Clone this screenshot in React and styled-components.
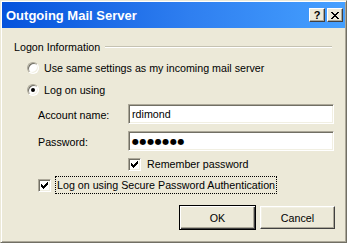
import React from "react";
import styled, { createGlobalStyle } from "styled-components";

const GlobalStyle = createGlobalStyle`
  html, body {
    margin: 0;
    padding: 0;
    background: #ece9d8;
  }
  body {
    font-family: "Liberation Sans", Arial, sans-serif;
    font-size: 10.7px;
    color: #000;
  }
`;

const Window = styled.div`
  width: 347px;
  height: 243px;
  box-sizing: border-box;
  background: #ece9d8;
  border: 1px solid;
  border-color: #ece9d8 #716f64 #716f64 #ece9d8;
  box-shadow: inset 1px 1px #fff, inset -1px -1px #aca899;
  padding: 1px;
  display: flex;
  flex-direction: column;
`;

const TitleBar = styled.div`
  height: 26px;
  flex: none;
  display: flex;
  align-items: center;
  padding: 0 2px;
  background: linear-gradient(to right, #0553dc, #2f7ff0 55%, #45a0ff);
`;

const Title = styled.div`
  flex: 1;
  color: #fff;
  font-weight: 700;
  font-size: 13px;
  padding-left: 2px;
`;

const CaptionButton = styled.div`
  width: 16px;
  height: 14px;
  box-sizing: border-box;
  margin-left: 2px;
  background: #ece9d8;
  border: 1px solid;
  border-color: #fff #404040 #404040 #fff;
  box-shadow: inset -1px -1px #aca899;
  display: flex;
  align-items: center;
  justify-content: center;
  font-weight: 700;
  font-size: 11px;
  line-height: 1;
`;

const Body = styled.div`
  flex: 1;
  display: flex;
  flex-direction: column;
  padding: 0 10px 0 12px;
`;

const GroupHeader = styled.div`
  margin-top: 13px;
  height: 12px;
  display: flex;
  align-items: center;
  gap: 5px;
`;

const GroupLine = styled.div`
  flex: 1;
  margin-right: 3px;
  border-top: 1px solid #c5c2b2;
  border-bottom: 1px solid #fff;
`;

const OptionRow = styled.div`
  height: 16px;
  margin-top: ${(p) => p.$top}px;
  margin-left: ${(p) => p.$left}px;
  display: flex;
  align-items: center;
  gap: ${(p) => p.$gap || 5}px;
`;

const Radio = styled.div`
  width: 12px;
  height: 12px;
  box-sizing: border-box;
  border-radius: 50%;
  background: #fff;
  border: 1px solid;
  border-color: #aca899 #fff #fff #aca899;
  box-shadow: inset 1px 1px #716f64, inset -1px -1px #f1efe2;
  display: flex;
  align-items: center;
  justify-content: center;
  &::after {
    content: "";
    width: 4px;
    height: 4px;
    border-radius: 50%;
    background: ${(p) => (p.$checked ? "#000" : "transparent")};
  }
`;

const Checkbox = styled.div`
  width: 13px;
  height: 13px;
  box-sizing: border-box;
  background: #fff;
  border: 1px solid;
  border-color: #aca899 #fff #fff #aca899;
  box-shadow: inset 1px 1px #716f64, inset -1px -1px #f1efe2;
  display: flex;
  align-items: center;
  justify-content: center;
`;

const FocusLabel = styled.span`
  padding: 1px 2px;
  outline: 1px dotted #000;
  outline-offset: -1px;
  line-height: 16px;
`;

const FieldRow = styled.div`
  margin-top: ${(p) => p.$top}px;
  margin-left: 24px;
  display: flex;
  align-items: center;
`;

const FieldLabel = styled.div`
  width: 90px;
  padding-top: 2px;
`;

const Field = styled.div`
  width: 206px;
  height: 20px;
  box-sizing: border-box;
  background: #fff;
  border: 1px solid;
  border-color: #aca899 #fff #fff #aca899;
  box-shadow: inset 1px 1px #716f64, inset -1px -1px #f1efe2;
  padding: 0 3px;
  display: flex;
  align-items: center;
`;

const Dots = styled.span`
  font-family: "DejaVu Sans", sans-serif;
  font-size: 8px;
  letter-spacing: 0.6px;
`;

const ButtonRow = styled.div`
  margin-top: 12px;
  display: flex;
  justify-content: flex-end;
  align-items: center;
  gap: 4px;
`;

const Button = styled.div`
  width: ${(p) => (p.$default ? 77 : 75)}px;
  height: ${(p) => (p.$default ? 25 : 23)}px;
  box-sizing: border-box;
  background: #ece9d8;
  border: 1px solid;
  border-color: ${(p) => (p.$default ? "#000" : "#fff #404040 #404040 #fff")};
  box-shadow: ${(p) =>
    p.$default
      ? "inset 1px 1px #fff, inset -1px -1px #404040, inset -2px -2px #aca899"
      : "inset -1px -1px #aca899, inset 1px 1px #f1efe2"};
  display: flex;
  align-items: center;
  justify-content: center;
`;

const Check = () => (
  <svg width="7" height="7" viewBox="0 0 7 7">
    <path d="M0 2h1v1h1v1h1V3h1V2h1V1h1V0h1v3H6v1H5v1H4v1H3v1H2V6H1V5H0z" fill="#000" />
  </svg>
);

const CloseGlyph = () => (
  <svg width="8" height="7" viewBox="0 0 8 7">
    <path d="M0 0h2v1h1v1h2V1h1V0h2v1H7v1H6v1H5v1h1v1h1v1h1v1H6V6H5V5H3v1H2v1H0V6h1V5h1V4h1V3H2V2H1V1H0z" fill="#000" />
  </svg>
);

export default function App() {
  return (
    <>
      <GlobalStyle />
      <Window>
        <TitleBar>
          <Title>Outgoing Mail Server</Title>
          <CaptionButton>?</CaptionButton>
          <CaptionButton>
            <CloseGlyph />
          </CaptionButton>
        </TitleBar>
        <Body>
          <GroupHeader>
            <span>Logon Information</span>
            <GroupLine />
          </GroupHeader>
          <OptionRow $top={7} $left={13}>
            <Radio />
            <span>Use same settings as my incoming mail server</span>
          </OptionRow>
          <OptionRow $top={6} $left={13}>
            <Radio $checked />
            <span>Log on using</span>
          </OptionRow>
          <FieldRow $top={6}>
            <FieldLabel>Account name:</FieldLabel>
            <Field>rdimond</Field>
          </FieldRow>
          <FieldRow $top={7}>
            <FieldLabel>Password:</FieldLabel>
            <Field>
              <Dots>●●●●●●●</Dots>
            </Field>
          </FieldRow>
          <OptionRow $top={5} $left={114} $gap={6}>
            <Checkbox>
              <Check />
            </Checkbox>
            <span>Remember password</span>
          </OptionRow>
          <OptionRow $top={5} $left={24} $gap={4}>
            <Checkbox>
              <Check />
            </Checkbox>
            <FocusLabel>Log on using Secure Password Authentication</FocusLabel>
          </OptionRow>
          <ButtonRow>
            <Button $default>OK</Button>
            <Button>Cancel</Button>
          </ButtonRow>
        </Body>
      </Window>
    </>
  );
}
